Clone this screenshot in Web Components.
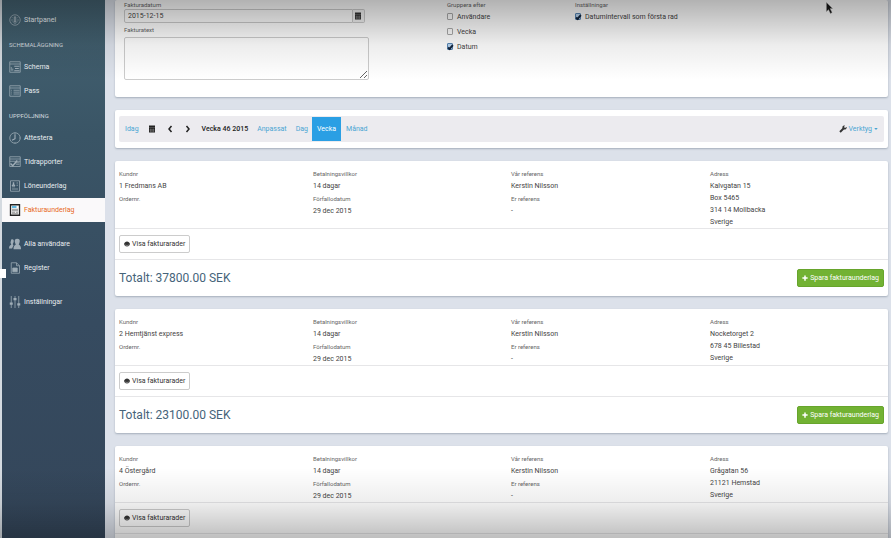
<!DOCTYPE html>
<html lang="sv">
<head>
<meta charset="utf-8">
<title>Fakturaunderlag</title>
<style>
  html, body { margin: 0; height: 100%; }
  body {
    font-family: Roboto, Lato, sans-serif;
    font-size: 7px;
    line-height: 12px;
    color: #444;
    overflow: hidden;
  }
</style>
</head>
<body>
<invoice-app></invoice-app>

<script>
const ICONS = {
  gauge: '<circle cx="8" cy="8" r="7"/><path d="M8 3v6M3 8h2M11 8h2M4 4.500l1 1M12 4.500l-1 1M4 11l1-1M12 11l-1-1"/><path d="M7 4h2v6H7z"/><circle cx="8" cy="11" r="1.500"/>',
  schema: '<path d="M1 1h14v14H1zM1 4h14"/><path d="M7 7h7M8 10h5M7 13h7" stroke-width="1.500"/><path d="M3 8v5M5 10v3"/>',
  list: '<path d="M1 1h14v14H1zM1 4h14M3 7h1M6 7h8M3 9.500h1M6 9.500h8M3 12h1M6 12h8"/>',
  clock: '<circle cx="8" cy="8" r="7"/><path d="M8 3v6L4 11M8 1v1M15 8h-1M8 15v-1" stroke-width="1.500"/>',
  report: '<path d="M1 1h14v13H1zM1 4h14M1 7h14M8 9h6M9 11h5"/><path d="M2 10l3 3 6-7" stroke-width="2"/>',
  payroll: '<path d="M2 1h12v14H2zM4 9h4M10 4h2M10 7h2M4 12h8"/><path d="M6 3v3M4.500 8c0-2 3-2 3 0" stroke-width="2"/>',
  invoice: '<path d="M2 1h12v14H2z" fill="#fff" stroke="#222" stroke-width="1.800"/><path d="M4 4h6" stroke="#2a9fd6" stroke-width="2"/><path d="M4 7h8M4 9h8M4 11h4M9 11h3M4 13h8" stroke="#666"/>',
  users: '<g fill="currentColor" stroke="none"><path d="M3 2c3-1 4 1 3 4l-1 2 1 2-2 4H0c0-3 1-4 3-5L2 6z"/><path d="M11 1c3 0 4 2 3 5l-1 3c2 1 3 2 3 6H6c0-4 1-5 3-6L8 6c-1-3 0-5 3-5z"/></g>',
  register: '<path d="M3 1h7l4 4v10H3zM10 1v4h4"/><path d="M5 8h6v5H5z" fill="currentColor"/>',
  sliders: '<path d="M3 0v16M8 0v16M13 0v16"/><path d="M1 10h4M6 4h4M11 11h4" stroke-width="3"/>',
  calendar: '<path d="M2 1h12v14H2z" fill="currentColor" stroke="none"/><path d="M2 5h12M5 7v7M8 7v7M11 7v7M3 9.500h10M3 12h10" stroke="#eee" stroke-width=".4"/>',
  left: '<path d="M11 2L6 8l5 6" stroke-width="3"/>',
  right: '<path d="M5 2l5 6-5 6" stroke-width="3"/>',
  wrench: '<path d="M2 14l7-7" stroke-width="4"/><path d="M15 4l-3 2-2-2 2-3c-4-1-6 2-5 5s5 4 7 2 2-3 1-4z" fill="currentColor" stroke="none"/>',
  eye: '<path d="M0 8c2-9 14-9 16 0-2 9-14 9-16 0z" fill="currentColor" stroke="none"/><path d="M2 9c2 4 10 4 12 0" stroke="#fff"/>',
  plus: '<path d="M8 1v14M1 8h14" stroke-width="4"/>',
  caret: '<path d="M1 4h14l-7 8z" fill="currentColor" stroke="none"/>'
};

const MENU = [
  { icon: 'gauge', text: 'Startpanel' },
  { heading: 'SCHEMALÄGGNING' },
  { icon: 'schema', text: 'Schema' },
  { icon: 'list', text: 'Pass' },
  { heading: 'UPPFÖLJNING' },
  { icon: 'clock', text: 'Attestera' },
  { icon: 'report', text: 'Tidrapporter' },
  { icon: 'payroll', text: 'Löneunderlag' },
  { icon: 'invoice', text: 'Fakturaunderlag', active: true },
  { gap: true },
  { icon: 'users', text: 'Alla användare' },
  { icon: 'register', text: 'Register' },
  { gap: true },
  { icon: 'sliders', text: 'Inställningar' }
];

const INVOICES = [
  { customer: '1 Fredmans AB', address: ['Kalvgatan 15', 'Box 5465', '314 14 Mollbacka', 'Sverige'], total: '37800.00' },
  { customer: '2 Hemtjänst express', address: ['Nocketorget 2', '678 45 Billestad', 'Sverige'], total: '23100.00' },
  { customer: '4 Östergård', address: ['Grågatan 56', '21121 Hemstad', 'Sverige'] }
];

class UiIcon extends HTMLElement {
  connectedCallback() {
    this.attachShadow({ mode: 'open' }).innerHTML = `
      <style>
        :host { display: inline-flex; flex: none; width: 8px; height: 8px; }
        svg { width: 100%; height: 100%; }
      </style>
      <svg viewBox="0 0 16 16" fill="none" stroke="currentColor" aria-hidden="true">${ICONS[this.getAttribute('name')]}</svg>
    `;
  }
}

class UiCard extends HTMLElement {
  connectedCallback() {
    this.attachShadow({ mode: 'open' }).innerHTML = `
      <style>
        :host {
          display: block;
          background: #fff;
          border-radius: 2px;
          box-shadow: 0 1px 2px rgba(60, 80, 100, 0.35);
        }
      </style>
      <slot></slot>
    `;
  }
}

class SideMenu extends HTMLElement {
  connectedCallback() {
    const rows = MENU.map(item => {
      if (item.heading) return `<h2>${item.heading}</h2>`;
      if (item.gap) return '<div class="gap"></div>';
      return `<a href="#" class="${item.active ? 'active' : ''}"><ui-icon name="${item.icon}"></ui-icon>${item.text}</a>`;
    }).join('');

    this.attachShadow({ mode: 'open' }).innerHTML = `
      <style>
        :host {
          display: block;
          position: relative;
          box-sizing: border-box;
          border-left: 2px solid #d4dae0;
          padding-top: 8px;
          background: linear-gradient(#446271, #3a5566 25%, #364b60 60%, #34465a);
        }
        nav { display: flex; flex-direction: column; }
        a {
          display: flex;
          align-items: center;
          gap: 3px;
          height: 24px;
          padding-left: 7px;
          color: #e8edf0;
          text-decoration: none;
        }
        ui-icon { width: 12px; height: 14px; color: #9fadb7; }
        .active { background: #faf9fa; color: #e8691c; }
        h2 {
          margin: 0;
          padding: 3px 0 0 7px;
          height: 20px;
          line-height: 20px;
          font-size: 6px;
          font-weight: normal;
          color: #d0d9df;
        }
        .gap { height: 10px; }
        .handle {
          position: absolute;
          left: -2px;
          top: 269px;
          width: 6px;
          height: 9px;
          background: #fff;
        }
      </style>
      <nav>${rows}</nav>
      <div class="handle"></div>
    `;
  }
}

class InvoiceSettings extends HTMLElement {
  connectedCallback() {
    this.attachShadow({ mode: 'open' }).innerHTML = `
      <style>
        :host { display: block; }
        form {
          display: grid;
          grid-template-columns: 323fr 128fr 313fr;
          padding: 0 0 17px 9px;
        }
        .label { display: block; font-size: 6px; line-height: 9px; color: #666; }
        .text-label { line-height: 14px; }
        .fields { width: 76%; }
        .date { display: flex; width: 98%; height: 14px; }
        input, textarea {
          box-sizing: border-box;
          font: inherit;
          color: #444;
          border: 1px solid #ccc;
          border-radius: 2px;
          margin: 0;
          background: #fff;
        }
        .date input { flex: 1; min-width: 0; padding: 0 3px; border-radius: 2px 0 0 2px; }
        .date button {
          display: grid;
          place-items: center;
          width: 12px;
          padding: 0;
          border: 1px solid #ccc;
          border-left: 0;
          border-radius: 0 2px 2px 0;
          background: #f4f4f4;
          color: #333;
        }
        textarea { display: block; width: 100%; height: 43px; resize: vertical; }
        .check { display: flex; align-items: center; gap: 4px; height: 15px; }
        .check input {
          appearance: none;
          width: 6px;
          height: 7px;
          border: 1px solid #aaa;
          border-radius: 1px;
          display: grid;
          place-content: center;
        }
        .check input:checked { border-color: #5886b5; background: #b8d5f0; }
        .check input:checked::before {
          content: "";
          width: 1px;
          height: 4px;
          border: solid #10233c;
          border-width: 0 2px 2px 0;
          transform: rotate(40deg);
        }
      </style>
      <form>
        <div class="fields">
          <label class="label" for="date">Fakturadatum</label>
          <div class="date">
            <input id="date" value="2015-12-15">
            <button type="button" aria-label="Välj datum"><ui-icon name="calendar"></ui-icon></button>
          </div>
          <label class="label text-label" for="text">Fakturatext</label>
          <textarea id="text"></textarea>
        </div>
        <div>
          <span class="label">Gruppera efter</span>
          <label class="check"><input type="checkbox">Användare</label>
          <label class="check"><input type="checkbox">Vecka</label>
          <label class="check"><input type="checkbox" checked>Datum</label>
        </div>
        <div>
          <span class="label">Inställningar</span>
          <label class="check"><input type="checkbox" checked>Datumintervall som första rad</label>
        </div>
      </form>
    `;
  }
}

class PeriodBar extends HTMLElement {
  connectedCallback() {
    this.attachShadow({ mode: 'open' }).innerHTML = `
      <style>
        :host { display: block; padding: 6px 4px; }
        .bar {
          display: flex;
          align-items: center;
          height: 26px;
          padding: 0 6px;
          border-radius: 2px;
          background: #ecebef;
        }
        button {
          display: flex;
          align-items: center;
          gap: 2px;
          height: 24px;
          padding: 0;
          border: 0;
          background: none;
          font: inherit;
          color: #4aa5d3;
        }
        .dark { color: #222; width: 8px; margin-right: 10px; }
        .today { margin-right: 9px; }
        .period { color: #222; font-weight: 500; margin-right: 9px; }
        .range { margin-right: 9px; }
        .day { margin-right: 4px; }
        .on { padding: 0 5px; margin-right: 5px; background: #2a9fe4; color: #fff; }
        .tools { margin-left: auto; }
        .tools ui-icon:first-child { color: #333; }
        .tools ui-icon:last-child { width: 4px; height: 4px; }
      </style>
      <div class="bar">
        <button class="today">Idag</button>
        <button class="dark" aria-label="Kalender"><ui-icon name="calendar"></ui-icon></button>
        <button class="dark" aria-label="Föregående"><ui-icon name="left"></ui-icon></button>
        <button class="dark" aria-label="Nästa"><ui-icon name="right"></ui-icon></button>
        <span class="period">Vecka 46 2015</span>
        <button class="range">Anpassat</button>
        <button class="day">Dag</button>
        <button class="on">Vecka</button>
        <button>Månad</button>
        <button class="tools"><ui-icon name="wrench"></ui-icon>Verktyg<ui-icon name="caret"></ui-icon></button>
      </div>
    `;
  }
}

class InvoiceCard extends HTMLElement {
  set invoice(invoice) {
    this._invoice = invoice;
    this.render();
  }

  render() {
    const { customer, address, total } = this._invoice;
    if (!this.shadowRoot) this.attachShadow({ mode: 'open' });
    this.shadowRoot.innerHTML = `
      <style>
        :host { display: block; }
        .info {
          display: grid;
          grid-template-columns: 194fr 198fr 199fr 178fr;
          padding: 6px 0 0 4px;
        }
        dl, dd { margin: 0; }
        dt { font-size: 6px; line-height: 13px; color: #666; }
        dd { min-height: 12px; }
        .rows, .sum {
          display: flex;
          align-items: center;
          border-top: 1px solid #e6e6e8;
          padding: 0 4px;
        }
        .rows { height: 30px; }
        .sum { height: 36px; justify-content: space-between; }
        h3 { margin: 0; font-size: 12px; line-height: 20px; font-weight: normal; color: #46647a; }
        button {
          display: flex;
          align-items: center;
          gap: 2px;
          height: 18px;
          padding: 0 4px;
          border: 1px solid #ccc;
          border-radius: 2px;
          background: #fff;
          font: inherit;
          color: #333;
        }
        ui-icon { width: 6px; height: 6px; }
        .save { border-color: #67a52c; background: #72b233; color: #fff; }
      </style>
      <div class="info">
        <dl><dt>Kundnr</dt><dd>${customer}</dd><dt>Ordernr.</dt><dd></dd></dl>
        <dl><dt>Betalningsvillkor</dt><dd>14 dagar</dd><dt>Förfallodatum</dt><dd>29 dec 2015</dd></dl>
        <dl><dt>Vår referens</dt><dd>Kerstin Nilsson</dd><dt>Er referens</dt><dd>-</dd></dl>
        <dl><dt>Adress</dt>${address.map(line => `<dd>${line}</dd>`).join('')}</dl>
      </div>
      <div class="rows"><button><ui-icon name="eye"></ui-icon>Visa fakturarader</button></div>
      <div class="sum">
        ${total ? `
          <h3>Totalt: ${total} SEK</h3>
          <button class="save"><ui-icon name="plus"></ui-icon>Spara fakturaunderlag</button>
        ` : ''}
      </div>
    `;
  }
}

class InvoiceApp extends HTMLElement {
  connectedCallback() {
    this.attachShadow({ mode: 'open' }).innerHTML = `
      <style>
        :host {
          display: grid;
          grid-template-columns: 105px 1fr;
          height: 100%;
          position: relative;
          overflow: hidden;
        }
        main {
          display: flex;
          flex-direction: column;
          gap: 13px;
          min-width: 0;
          overflow: hidden;
          padding: 0 3px 0 10px;
          background: #dce1ea;
        }
        main > * { flex: none; }
        /* shade along the top and bottom edges */
        .shade {
          position: absolute;
          inset: 0;
          pointer-events: none;
          background:
            linear-gradient(rgba(0, 0, 0, 0.3), rgba(0, 0, 0, 0.07) 45px, transparent 80px),
            linear-gradient(to top, rgba(0, 0, 0, 0.25), rgba(0, 0, 0, 0.07) 35px, transparent 70px);
        }
        .pointer { position: absolute; left: 826px; top: 2px; width: 7px; height: 12px; }
      </style>
      <side-menu></side-menu>
      <main>
        <ui-card><invoice-settings></invoice-settings></ui-card>
        <ui-card><period-bar></period-bar></ui-card>
      </main>
      <div class="shade"></div>
      <svg class="pointer" viewBox="0 0 7 12"><path d="M.5.5v9l2-2 2 4 1.500-1-2-4H6.500z" fill="#111" stroke="#777" stroke-width=".4"/></svg>
    `;

    const main = this.shadowRoot.querySelector('main');
    INVOICES.forEach(invoice => {
      const card = document.createElement('ui-card');
      const content = document.createElement('invoice-card');
      content.invoice = invoice;
      card.append(content);
      main.append(card);
    });
  }
}

customElements.define('ui-icon', UiIcon);
customElements.define('ui-card', UiCard);
customElements.define('side-menu', SideMenu);
customElements.define('invoice-settings', InvoiceSettings);
customElements.define('period-bar', PeriodBar);
customElements.define('invoice-card', InvoiceCard);
customElements.define('invoice-app', InvoiceApp);
</script>
</body>
</html>
